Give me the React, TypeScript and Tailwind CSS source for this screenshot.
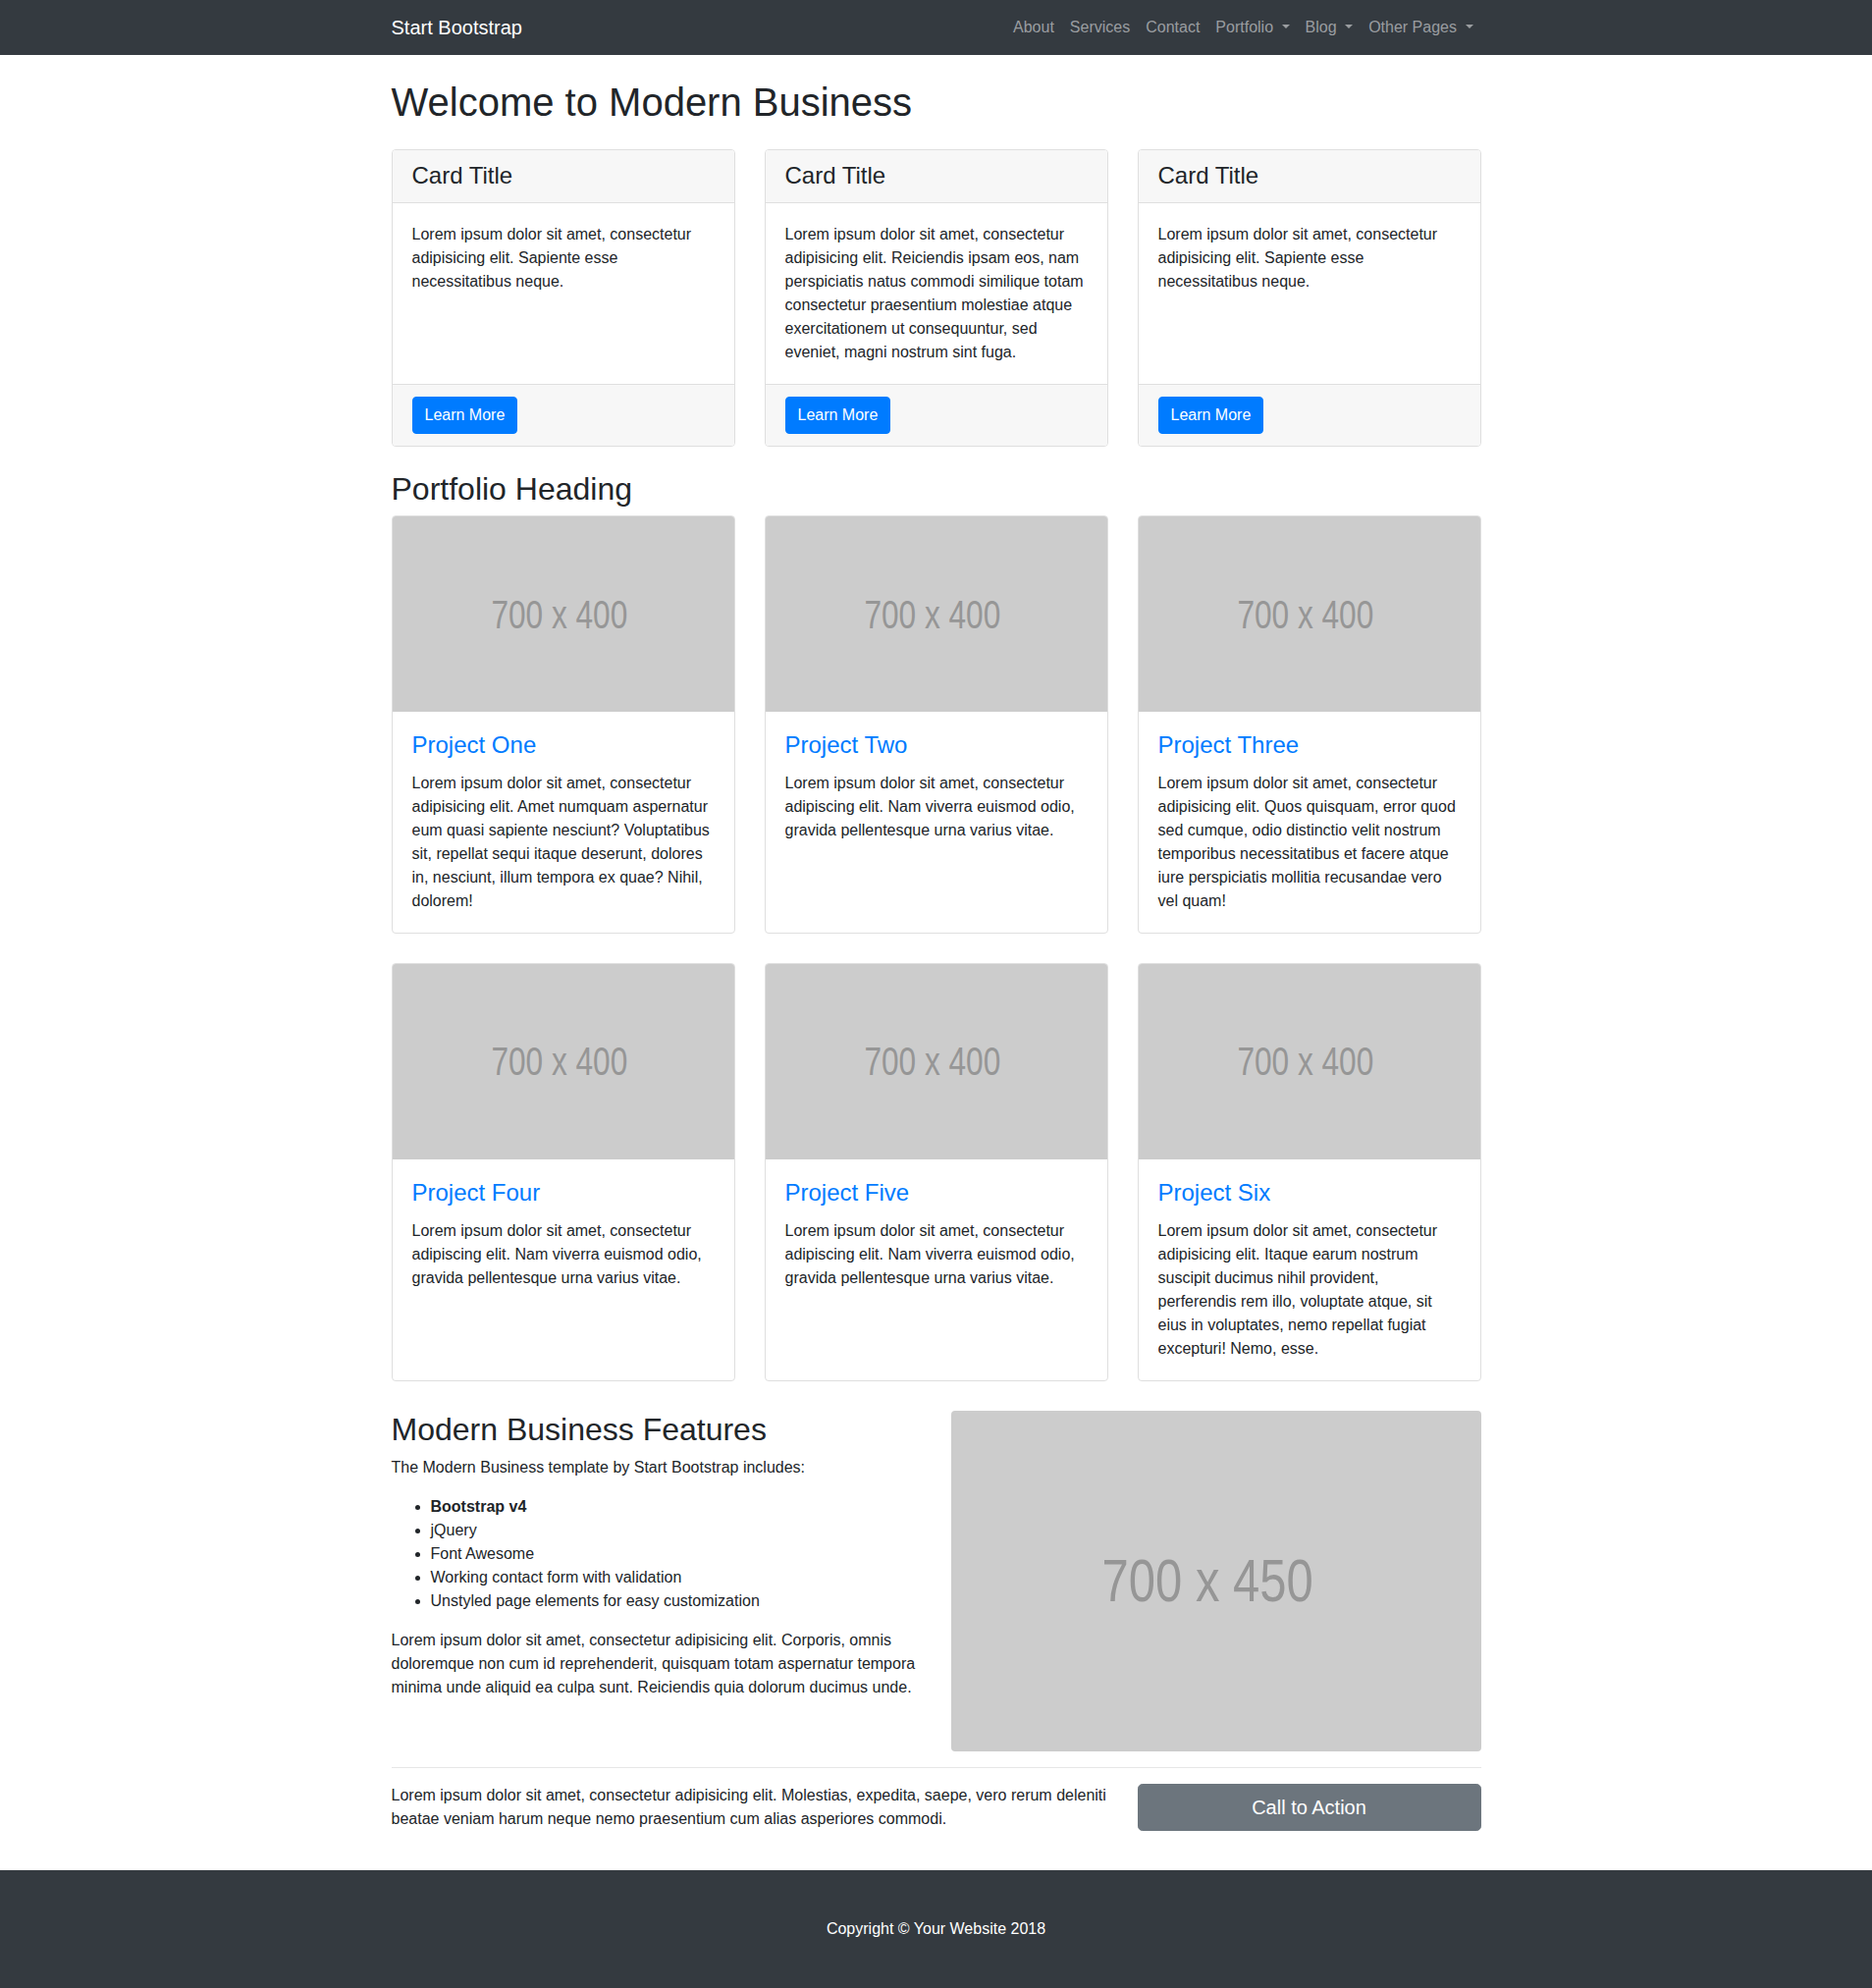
const NAV_LINKS = [
  { label: "About" },
  { label: "Services" },
  { label: "Contact" },
  { label: "Portfolio", dropdown: true },
  { label: "Blog", dropdown: true },
  { label: "Other Pages", dropdown: true },
];

const CARDS = [
  "Lorem ipsum dolor sit amet, consectetur adipisicing elit. Sapiente esse necessitatibus neque.",
  "Lorem ipsum dolor sit amet, consectetur adipisicing elit. Reiciendis ipsam eos, nam perspiciatis natus commodi similique totam consectetur praesentium molestiae atque exercitationem ut consequuntur, sed eveniet, magni nostrum sint fuga.",
  "Lorem ipsum dolor sit amet, consectetur adipisicing elit. Sapiente esse necessitatibus neque.",
];

const PROJECTS = [
  {
    title: "Project One",
    text: "Lorem ipsum dolor sit amet, consectetur adipisicing elit. Amet numquam aspernatur eum quasi sapiente nesciunt? Voluptatibus sit, repellat sequi itaque deserunt, dolores in, nesciunt, illum tempora ex quae? Nihil, dolorem!",
  },
  {
    title: "Project Two",
    text: "Lorem ipsum dolor sit amet, consectetur adipiscing elit. Nam viverra euismod odio, gravida pellentesque urna varius vitae.",
  },
  {
    title: "Project Three",
    text: "Lorem ipsum dolor sit amet, consectetur adipisicing elit. Quos quisquam, error quod sed cumque, odio distinctio velit nostrum temporibus necessitatibus et facere atque iure perspiciatis mollitia recusandae vero vel quam!",
  },
  {
    title: "Project Four",
    text: "Lorem ipsum dolor sit amet, consectetur adipiscing elit. Nam viverra euismod odio, gravida pellentesque urna varius vitae.",
  },
  {
    title: "Project Five",
    text: "Lorem ipsum dolor sit amet, consectetur adipiscing elit. Nam viverra euismod odio, gravida pellentesque urna varius vitae.",
  },
  {
    title: "Project Six",
    text: "Lorem ipsum dolor sit amet, consectetur adipisicing elit. Itaque earum nostrum suscipit ducimus nihil provident, perferendis rem illo, voluptate atque, sit eius in voluptates, nemo repellat fugiat excepturi! Nemo, esse.",
  },
];

const FEATURES = [
  "jQuery",
  "Font Awesome",
  "Working contact form with validation",
  "Unstyled page elements for easy customization",
];

function Caret() {
  return (
    <span className="inline-block ml-[0.255em] align-[0.255em] border-t-[0.3em] border-x-[0.3em] border-b-0 border-t-[#9a9da0] border-x-transparent" />
  );
}

// placeholder image box, text squeezed to look like the narrow placehold.it font
function Placeholder({ label, className }: { label: string; className: string }) {
  return (
    <div className={`flex items-center justify-center bg-[#cccccc] text-[#969696] ${className}`}>
      <span className="inline-block scale-x-[0.79]">{label}</span>
    </div>
  );
}

export default function App() {
  return (
    <div className="min-h-screen bg-white text-[#212529] text-base leading-6 font-['Liberation_Sans',Arial,sans-serif]">
      {/* Navbar */}
      <nav className="bg-[#343a40] py-2">
        <div className="w-[1140px] mx-auto px-[15px] flex items-center justify-between">
          <a className="text-white text-[20px] leading-[30px] py-[5px]">Start Bootstrap</a>
          <ul className="flex items-center">
            {NAV_LINKS.map((l) => (
              <li key={l.label}>
                <a className="block px-2 py-2 text-[#9a9da0] whitespace-nowrap">
                  {l.label}
                  {l.dropdown && (
                    <>
                      {" "}
                      <Caret />
                    </>
                  )}
                </a>
              </li>
            ))}
          </ul>
        </div>
      </nav>

      <main className="w-[1140px] mx-auto px-[15px]">
        <h1 className="my-6 text-[40px] leading-[1.2] font-normal">Welcome to Modern Business</h1>

        {/* Marketing cards */}
        <div className="grid grid-cols-3 gap-x-[30px] mb-6">
          {CARDS.map((text, i) => (
            <div key={i} className="flex flex-col rounded border border-[#dfdfdf] overflow-hidden">
              <h4 className="bg-[#f7f7f7] border-b border-[#dfdfdf] px-5 py-3 text-2xl leading-[1.2] font-normal">
                Card Title
              </h4>
              <div className="flex-1 p-5">
                <p>{text}</p>
              </div>
              <div className="bg-[#f7f7f7] border-t border-[#dfdfdf] px-5 py-3">
                <a className="inline-block bg-[#007bff] text-white px-3 py-[6px] rounded border border-[#007bff] leading-6">
                  Learn More
                </a>
              </div>
            </div>
          ))}
        </div>

        {/* Portfolio */}
        <h2 className="text-[32px] leading-[1.2] font-normal mb-2">Portfolio Heading</h2>
        <div className="grid grid-cols-3 gap-[30px] mb-[30px]">
          {PROJECTS.map((p) => (
            <div key={p.title} className="flex flex-col rounded border border-[#dfdfdf] overflow-hidden">
              <Placeholder label="700 x 400" className="h-[198.86px] text-[40px] pr-[8px]" />
              <div className="flex-1 p-5">
                <h4 className="text-2xl leading-[1.2] font-normal mb-3 text-[#007bff]">{p.title}</h4>
                <p>{p.text}</p>
              </div>
            </div>
          ))}
        </div>

        {/* Features */}
        <div className="grid grid-cols-2 gap-x-[30px] items-start">
          <div>
            <h2 className="text-[32px] leading-[1.2] font-normal mb-2">Modern Business Features</h2>
            <p className="mb-4">The Modern Business template by Start Bootstrap includes:</p>
            <ul className="list-disc pl-10 mb-4">
              <li>
                <strong className="font-bold">Bootstrap v4</strong>
              </li>
              {FEATURES.map((f) => (
                <li key={f}>{f}</li>
              ))}
            </ul>
            <p className="mb-4">
              Lorem ipsum dolor sit amet, consectetur adipisicing elit. Corporis, omnis doloremque non cum id
              reprehenderit, quisquam totam aspernatur tempora minima unde aliquid ea culpa sunt. Reiciendis quia
              dolorum ducimus unde.
            </p>
          </div>
          <Placeholder label="700 x 450" className="h-[347.14px] rounded text-[62px] pr-[16px]" />
        </div>

        <div className="my-4 border-t border-[#e6e6e6]" />

        {/* Call to action */}
        <div className="flex gap-x-[30px] mb-6">
          <div className="w-[730px]">
            <p className="mb-4">
              Lorem ipsum dolor sit amet, consectetur adipisicing elit. Molestias, expedita, saepe, vero rerum deleniti
              beatae veniam harum neque nemo praesentium cum alias asperiores commodi.
            </p>
          </div>
          <div className="w-[350px]">
            <a className="block w-full text-center text-xl leading-[1.5] py-2 px-4 rounded-[4.8px] bg-[#6c757d] border border-[#6c757d] text-white">
              Call to Action
            </a>
          </div>
        </div>
      </main>

      {/* Footer */}
      <footer className="py-12 bg-[#343a40]">
        <p className="m-0 text-center text-white">Copyright &copy; Your Website 2018</p>
      </footer>
    </div>
  );
}
